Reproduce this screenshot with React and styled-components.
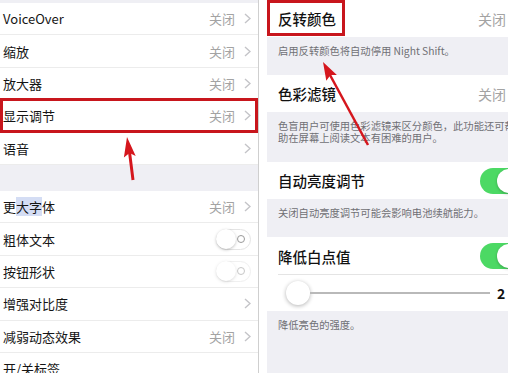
import React from "react";
import styled, { createGlobalStyle } from "styled-components";

const GlobalStyle = createGlobalStyle`
  body {
    margin: 0;
    background: #fff;
    font-family: "Noto Sans CJK SC", "Noto Sans", sans-serif;
  }
`;

const Screen = styled.div`
  position: relative;
  display: flex;
  width: 508px;
  height: 373px;
  overflow: hidden;
  background: #fff;
`;

/* ---------- left panel ---------- */

const LeftPanel = styled.div`
  width: 259px;
  box-sizing: border-box;
  padding-top: 3px;
  border-right: 1px solid #cfcfcf;
  background: #efeff4;
`;

const Group = styled.div`
  background: #fff;
  margin-bottom: ${(p) => p.$gap || 0}px;
`;

const Row = styled.div`
  position: relative;
  display: flex;
  align-items: center;
  height: 32.4px;
  box-sizing: border-box;
  padding: 0 7px 0 3px;
  border-bottom: 1px solid #ececec;
`;

const Label = styled.div`
  flex: 1;
  font-size: 13px;
  color: #151515;
  white-space: nowrap;
`;

const Mark = styled.span`
  background: rgba(120, 150, 220, 0.32);
`;

const Value = styled.div`
  font-size: 13px;
  color: #a3a3a3;
`;

const ChevronIcon = styled.svg`
  margin-left: ${(p) => p.$gap || 9}px;
  flex: none;
`;

const Chevron = ({ gap }) => (
  <ChevronIcon $gap={gap} width="7" height="11" viewBox="0 0 7 11">
    <polyline
      points="1,1 6,5.5 1,10"
      fill="none"
      stroke="#c4c4c8"
      strokeWidth="1.4"
    />
  </ChevronIcon>
);

const OffSwitch = styled.div`
  position: relative;
  width: 35px;
  height: 21px;
  box-sizing: border-box;
  border: 1.5px solid #e4e4e4;
  border-radius: 11px;
  opacity: ${(p) => (p.$faded ? 0.55 : 1)};

  &::before {
    content: "";
    position: absolute;
    left: -1px;
    top: -1px;
    width: 20px;
    height: 20px;
    border-radius: 50%;
    background: #fff;
    box-shadow: 0 1px 3px rgba(0, 0, 0, 0.25);
  }

  &::after {
    content: "";
    position: absolute;
    right: 5px;
    top: 5px;
    width: 6px;
    height: 6px;
    border: 1px solid #9a9a9a;
    border-radius: 50%;
  }
`;

const RedBox = styled.div`
  position: absolute;
  left: ${(p) => p.$left}px;
  top: ${(p) => p.$top}px;
  width: ${(p) => p.$w}px;
  height: ${(p) => p.$h}px;
  box-sizing: border-box;
  border: 3px solid #c8161d;
  pointer-events: none;
`;

/* ---------- right panel ---------- */

const Spacer = styled.div`
  width: 8px;
  flex: none;
  background: #fff;
`;

const RightPanel = styled.div`
  flex: 1;
  overflow: hidden;
  background: #efeff4;
`;

const RightInner = styled.div`
  width: 270px;
`;

const RRow = styled.div`
  position: relative;
  display: flex;
  align-items: center;
  height: ${(p) => p.$h || 37}px;
  box-sizing: border-box;
  padding: 0 15px 0 11px;
  background: #fff;

  ${(p) =>
    p.$inset &&
    `
    &::after {
      content: "";
      position: absolute;
      left: 11px;
      right: 0;
      bottom: 0;
      height: 1px;
      background: #e4e4e4;
    }
  `}
`;

const RLabel = styled.div`
  flex: 1;
  font-size: 14.5px;
  font-weight: 500;
  color: #111;
  white-space: nowrap;
`;

const RValue = styled.div`
  font-size: 14px;
  color: #a3a3a3;
`;

const Footer = styled.div`
  padding: 8px 0 18px 11px;
  font-size: 10.3px;
  line-height: 12px;
  color: #707074;
  white-space: nowrap;
`;

const OnSwitch = styled.div`
  position: relative;
  width: 42px;
  height: 26px;
  border-radius: 13px;
  background: #4cd964;

  &::after {
    content: "";
    position: absolute;
    right: 1px;
    top: 1px;
    width: 24px;
    height: 24px;
    border-radius: 50%;
    background: #fff;
    box-shadow: 0 1px 3px rgba(0, 0, 0, 0.25);
  }
`;

const SliderRow = styled(RRow)`
  padding-left: 19px;
`;

const Thumb = styled.div`
  width: 24px;
  height: 24px;
  flex: none;
  border-radius: 50%;
  background: #fff;
  box-shadow: 0 1px 4px rgba(0, 0, 0, 0.3);
`;

const Track = styled.div`
  width: 180px;
  height: 1.5px;
  background: #b9b9b9;
`;

const SliderValue = styled.div`
  margin-left: 7px;
  font-size: 14px;
  font-weight: 700;
  color: #111;
`;

const Arrows = styled.svg`
  position: absolute;
  left: 0;
  top: 0;
  pointer-events: none;
`;

const leftItems = [
  { label: "VoiceOver", value: "关闭" },
  { label: "缩放", value: "关闭" },
  { label: "放大器", value: "关闭" },
  { label: "显示调节", value: "关闭", marked: true },
  { label: "语音" },
];

const App = () => {
  return (
    <>
      <GlobalStyle />
      <Screen>
        <LeftPanel>
          <Group $gap={26}>
            {leftItems.map((item) => (
              <Row key={item.label}>
                <Label>{item.label}</Label>
                {item.value && <Value>{item.value}</Value>}
                <Chevron />
                {item.marked && (
                  <RedBox $left={0} $top={-2} $w={258} $h={35} />
                )}
              </Row>
            ))}
          </Group>
          <Group>
            <Row>
              <Label>
                更<Mark>大字</Mark>体
              </Label>
              <Value>关闭</Value>
              <Chevron />
            </Row>
            <Row>
              <Label>粗体文本</Label>
              <OffSwitch />
            </Row>
            <Row>
              <Label>按钮形状</Label>
              <OffSwitch $faded />
            </Row>
            <Row>
              <Label>增强对比度</Label>
              <Chevron />
            </Row>
            <Row>
              <Label>减弱动态效果</Label>
              <Value>关闭</Value>
              <Chevron />
            </Row>
            <Row>
              <Label>开/关标签</Label>
            </Row>
          </Group>
        </LeftPanel>

        <Spacer />

        <RightPanel>
          <RightInner>
            <RRow>
              <RLabel>反转颜色</RLabel>
              <RValue>关闭</RValue>
              <Chevron />
              <RedBox $left={0} $top={0} $w={78} $h={36} />
            </RRow>
            <Footer>启用反转颜色将自动停用 Night Shift。</Footer>

            <RRow>
              <RLabel>色彩滤镜</RLabel>
              <RValue>关闭</RValue>
              <Chevron />
            </RRow>
            <Footer>
              色盲用户可使用色彩滤镜来区分颜色，此功能还可帮
              <br />
              助在屏幕上阅读文本有困难的用户。
            </Footer>

            <RRow>
              <RLabel>自动亮度调节</RLabel>
              <OnSwitch />
            </RRow>
            <Footer>关闭自动亮度调节可能会影响电池续航能力。</Footer>

            <RRow $h={38} $inset>
              <RLabel>降低白点值</RLabel>
              <OnSwitch />
            </RRow>
            <SliderRow $h={36}>
              <Thumb />
              <Track />
              <SliderValue>2</SliderValue>
            </SliderRow>
            <Footer>降低亮色的强度。</Footer>
          </RightInner>
        </RightPanel>

        <Arrows width="508" height="373" viewBox="0 0 508 373">
          <line
            x1="133"
            y1="180"
            x2="129.5"
            y2="152"
            stroke="#d5161d"
            strokeWidth="3"
          />
          <polygon
            points="127,137 135.7,156 129.5,153 123.9,157.6"
            fill="#d5161d"
          />
          <line
            x1="368"
            y1="145"
            x2="330"
            y2="75"
            stroke="#d5161d"
            strokeWidth="2.5"
          />
          <polygon
            points="323,62 336.9,74.9 330.5,75 326.3,80.7"
            fill="#d5161d"
          />
        </Arrows>
      </Screen>
    </>
  );
};

export default App;
